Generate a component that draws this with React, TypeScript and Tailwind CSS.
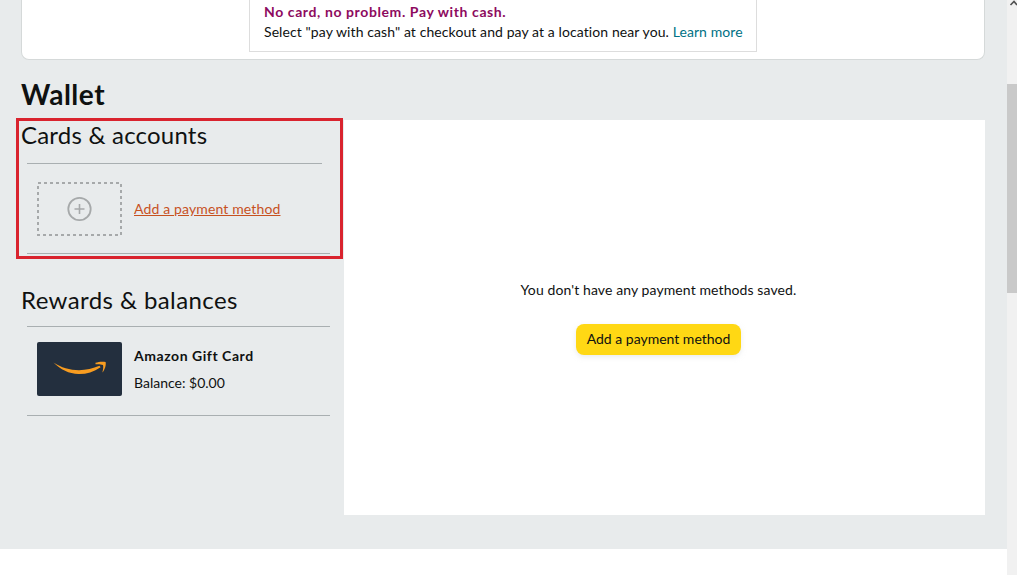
import React from 'react';

const font = { fontFamily: 'Lato, sans-serif' };

function PlusTile() {
  return (
    <svg width="85" height="54" viewBox="0 0 85 54" fill="none" stroke="#a6a9aa">
      <rect x="1" y="1" width="83" height="52" strokeWidth="2" strokeDasharray="3 3" />
      <circle cx="42.5" cy="27" r="11.2" strokeWidth="1.8" />
      <path d="M42.5 22v10M37.5 27h10" strokeWidth="1.6" />
    </svg>
  );
}

function GiftTile() {
  return (
    <div className="w-[85px] h-[54px] rounded-[2px] bg-[#232f3e] flex items-center justify-center">
      <svg width="54" height="16" viewBox="0 0 54 16" fill="#f79c20">
        <path d="M0.5 1.5C8 6.5 17 9.2 26 9.2C33 9.2 40 7.5 46.5 4.8L47.6 6.2C40.5 11 33 13.2 25.5 13C16 12.8 7.5 8.6 0.5 1.5Z" />
        <path d="M42.5 1.8C45.5 0.6 50 0.3 52.6 1C53.3 3.6 52 8.6 49.4 11.6C50 8.6 50.6 6 50 3.9C48.2 3.2 45.5 3 42.5 3.2Z" />
      </svg>
    </div>
  );
}

export default function App() {
  return (
    <div className="relative flex w-full h-[575px] overflow-hidden bg-white text-[#0f1111]" style={font}>
      <div className="flex-1 flex flex-col min-w-0">
        <div className="h-[549px] bg-[#e8ebec] px-[21px] shrink-0">
          {/* Pay with cash banner */}
          <div className="h-[60px] w-[964px] bg-white border border-t-0 border-[#d5d9d9] rounded-b-[8px] pl-[227px]">
            <div className="w-[508px] h-[52px] border border-t-0 border-[#dddddd] pl-[14px] pt-[2px] text-[14px] leading-[20px]">
              <p className="font-bold text-[#8d0a5e] text-[14px] tracking-[0.6px]">No card, no problem. Pay with cash.</p>
              <p className="whitespace-nowrap tracking-[0.09px]">
                Select "pay with cash" at checkout and pay at a location near you. <a className="text-[#007185]">Learn more</a>
              </p>
            </div>
          </div>
          <h1 className="text-[28px] leading-[36px] font-bold mt-[16px] tracking-[0.5px]">Wallet</h1>
          <div className="flex mt-[8px]">
            {/* Left column */}
            <div className="w-[323px] shrink-0">
              <h2 className="text-[24px] leading-[30px] tracking-[0.2px]">Cards &amp; accounts</h2>
              <div className="ml-[6px] mt-[13px] w-[295px] border-t border-[#a9afb1]" />
              <div className="ml-[16px] mt-[18px] flex items-center gap-[12px]">
                <PlusTile />
                <a className="text-[14px] leading-[20px] text-[#c7511f] underline tracking-[0.14px]">Add a payment method</a>
              </div>
              <div className="ml-[6px] mt-[17px] w-[303px] border-t border-[#a9afb1]" />
              <h2 className="text-[24px] leading-[30px] mt-[31px] tracking-[0.4px]">Rewards &amp; balances</h2>
              <div className="ml-[6px] mt-[11px] w-[303px] border-t border-[#a9afb1]" />
              <div className="ml-[16px] mt-[15px] flex items-center gap-[12px]">
                <GiftTile />
                <div className="text-[14px] leading-[20px]">
                  <p className="font-bold tracking-[0.55px]">Amazon Gift Card</p>
                  <p className="mt-[7px]">Balance: $0.00</p>
                </div>
              </div>
              <div className="ml-[6px] mt-[19px] w-[303px] border-t border-[#a9afb1]" />
            </div>
            {/* Right panel */}
            <div className="w-[641px] h-[395px] bg-white flex flex-col items-center pt-[160px] pr-[12px]">
              <p className="text-[14px] leading-[20px] tracking-[0.1px]">You don't have any payment methods saved.</p>
              <button className="mt-[24px] pb-[2px] h-[31px] w-[165px] rounded-[8px] bg-[#ffd814] text-[14px] leading-[20px] shadow-[0_2px_5px_rgba(213,217,217,0.5)]">
                Add a payment method
              </button>
            </div>
          </div>
        </div>
      </div>
      {/* Browser scrollbar */}
      <div className="w-[10px] shrink-0 bg-[#f1f1f1]">
        <svg width="10" height="6" viewBox="0 0 10 6" fill="none" stroke="#505050" strokeWidth="1.6" className="block">
          <path d="M3.5 5L7 1.5L10 5" />
        </svg>
        <div className="mt-[78px] h-[209px] bg-[#c9c9c9]" />
      </div>
      {/* Red annotation box */}
      <div className="absolute left-[16px] top-[118px] w-[327px] h-[141px] border-[3px] border-[#d9232e]" />
    </div>
  );
}
